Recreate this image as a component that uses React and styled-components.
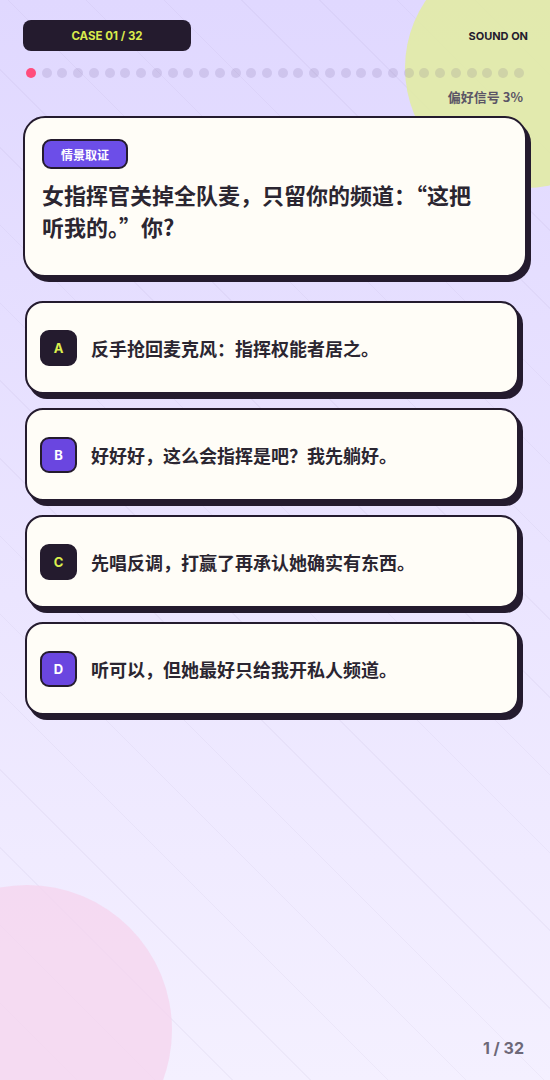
import React from 'react';
import styled, { createGlobalStyle } from 'styled-components';

const GlobalStyle = createGlobalStyle`
    html, body {
        margin: 0;
        padding: 0;
    }
    body {
        font-family: "Inter", "Noto Sans CJK SC", sans-serif;
        background: #e9e2ff;
    }
`;

const cjk = `"Noto Sans CJK SC", "Inter", sans-serif`;

const Page = styled.div`
    position: relative;
    width: 550px;
    min-height: 1080px;
    overflow: hidden;
    box-sizing: border-box;
    padding: 20px 23px 0 23px;
    background: linear-gradient(180deg, #e0d8ff 0%, #ebe5ff 55%, #f4f0ff 100%);
    display: flex;
    flex-direction: column;

    &::before {
        content: '';
        position: absolute;
        inset: 0;
        background: repeating-linear-gradient(
            45deg,
            transparent 0 54px,
            rgba(110, 90, 150, 0.05) 54px 55px
        );
        pointer-events: none;
    }
`;

const Blob = styled.div`
    position: absolute;
    border-radius: 50%;
    width: ${(p) => p.size}px;
    height: ${(p) => p.size}px;
    left: ${(p) => p.x}px;
    top: ${(p) => p.y}px;
    background: ${(p) => p.color};
    pointer-events: none;
`;

const Layer = styled.div`
    position: relative;
    z-index: 1;
    display: flex;
    flex-direction: column;
    flex: 1;
`;

const TopBar = styled.div`
    display: flex;
    justify-content: space-between;
    align-items: center;
    height: 31px;
`;

const CasePill = styled.div`
    width: 168px;
    height: 31px;
    border-radius: 8px;
    background: #241b2e;
    color: #d9ea4c;
    font-size: 11.5px;
    font-weight: 700;
    display: flex;
    align-items: center;
    justify-content: center;
`;

const Sound = styled.div`
    font-size: 11px;
    font-weight: 700;
    color: #241b2e;
    margin-right: -1px;
`;

const Dots = styled.div`
    display: flex;
    justify-content: space-between;
    margin: 17px 3px 0 3px;
`;

const Dot = styled.span`
    width: 10px;
    height: 10px;
    border-radius: 50%;
    background: ${(p) => (p.active ? '#ff4d7c' : 'rgba(90, 70, 130, 0.14)')};
`;

const Signal = styled.div`
    align-self: flex-end;
    margin: 9px 4px 0 0;
    font-family: ${cjk};
    font-size: 13px;
    font-weight: 700;
    color: #5b5566;
`;

const QuestionCard = styled.div`
    margin-top: 10px;
    box-sizing: border-box;
    width: 504px;
    min-height: 161px;
    padding: 21px 16px 28px 17px;
    background: #fffdf7;
    border: 2px solid #241b2e;
    border-radius: 22px;
    box-shadow: 4px 5px 0 #241b2e;
`;

const Tag = styled.div`
    display: inline-flex;
    align-items: center;
    height: 30px;
    box-sizing: border-box;
    padding: 0 17px;
    border: 2px solid #241b2e;
    border-radius: 9px;
    background: #6c4ee8;
    color: #fff;
    font-family: ${cjk};
    font-size: 12px;
    font-weight: 700;
`;

const Question = styled.div`
    margin-top: 9px;
    font-family: ${cjk};
    font-size: 22px;
    line-height: 32px;
    font-weight: 700;
    color: #2b2631;
`;

const Wide = styled.span`
    font-feature-settings: "fwid";
`;

const Options = styled.div`
    display: flex;
    flex-direction: column;
    gap: 14px;
    margin: 24px 0 0 2px;
`;

const OptionCard = styled.div`
    box-sizing: border-box;
    width: 494px;
    height: 93px;
    display: flex;
    align-items: center;
    gap: 14px;
    padding: 0 13px;
    background: #fffdf7;
    border: 2px solid #241b2e;
    border-radius: 18px;
    box-shadow: 4px 5px 0 #241b2e;
`;

const Badge = styled.div`
    flex: none;
    width: 37px;
    height: 36px;
    box-sizing: border-box;
    border: 2px solid #241b2e;
    border-radius: 9px;
    background: ${(p) => (p.tone === 'dark' ? '#241b2e' : '#6a46e0')};
    color: ${(p) => (p.tone === 'dark' ? '#dcef4e' : '#ffffff')};
    font-size: 13px;
    font-weight: 700;
    display: flex;
    align-items: center;
    justify-content: center;
`;

const OptionText = styled.div`
    font-family: ${cjk};
    font-size: 18px;
    font-weight: 700;
    color: #2b2631;
`;

const Footer = styled.div`
    margin-top: auto;
    align-self: flex-end;
    padding: 0 3px 22px 0;
    font-size: 16px;
    font-weight: 700;
    color: #6d6878;
`;

const options = [
    { key: 'A', tone: 'dark', text: '反手抢回麦克风：指挥权能者居之。' },
    { key: 'B', tone: 'purple', text: '好好好，这么会指挥是吧？我先躺好。' },
    { key: 'C', tone: 'dark', text: '先唱反调，打赢了再承认她确实有东西。' },
    { key: 'D', tone: 'purple', text: '听可以，但她最好只给我开私人频道。' },
];

export default function App() {
    return (
        <Page>
            <GlobalStyle />
            <Blob size={240} x={405} y={-52} color="rgba(226, 236, 160, 0.85)" />
            <Blob size={290} x={-118} y={885} color="rgba(245, 212, 238, 0.75)" />
            <Layer>
                <TopBar>
                    <CasePill>CASE 01 / 32</CasePill>
                    <Sound>SOUND ON</Sound>
                </TopBar>
                <Dots>
                    {Array.from({ length: 32 }).map((_, i) => (
                        <Dot key={i} active={i === 0} />
                    ))}
                </Dots>
                <Signal>偏好信号 3%</Signal>
                <QuestionCard>
                    <Tag>情景取证</Tag>
                    <Question>
                        女指挥官关掉全队麦，只留你的频道：<Wide>“</Wide>这把
                        <br />
                        听我的。<Wide>”</Wide>你?
                    </Question>
                </QuestionCard>
                <Options>
                    {options.map((o) => (
                        <OptionCard key={o.key}>
                            <Badge tone={o.tone}>{o.key}</Badge>
                            <OptionText>{o.text}</OptionText>
                        </OptionCard>
                    ))}
                </Options>
                <Footer>1 / 32</Footer>
            </Layer>
        </Page>
    );
}
